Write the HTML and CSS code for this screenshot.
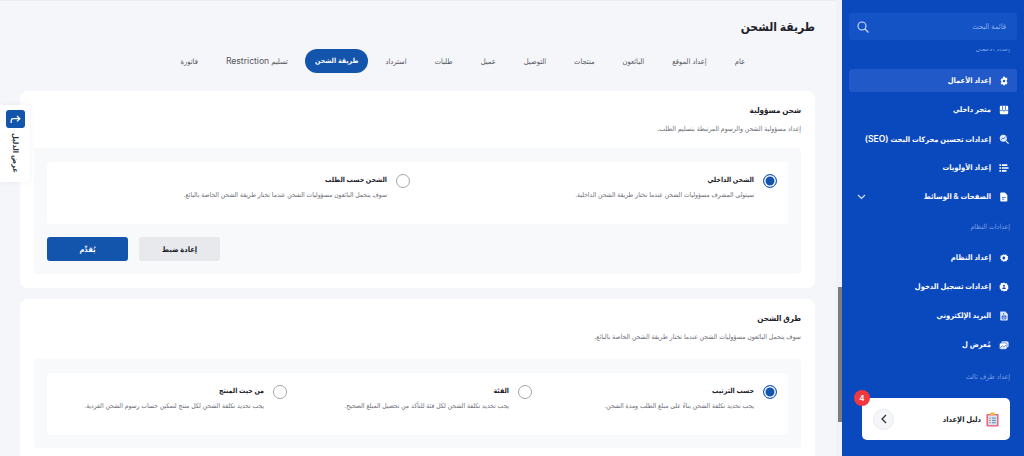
FILE: index.html
```html
<!DOCTYPE html>
<html lang="ar" dir="rtl">
<head>
    <meta charset="UTF-8">
    <meta name="viewport" content="width=device-width, initial-scale=1.0">
    <title>طريقة الشحن</title>
    <link rel="stylesheet" href="styles.css">
</head>
<body>
  <div class="layout">
    <aside class="sidebar">
      <div class="search">
        <span class="search-label">قائمة البحث</span>
        <svg class="search-icon" width="12" height="12" viewBox="0 0 12 12" fill="none" stroke="#d5e2fb" stroke-width="1.1"><circle cx="5" cy="5" r="4"/><path d="M8 8l3.500 3.500"/></svg>
      </div>
      <nav class="menu">
        <div class="menu-heading clipped">إعداد الأعمال</div>
        <a class="menu-item active">
          <svg class="menu-icon" viewBox="0 0 12 12"><path fill="#fff" fill-rule="evenodd" d="M4.800 1h2.400l.4 1.300 1.400-.4 1.200 2.100-1 1v2l1 1-1.200 2.100-1.400-.4-.4 1.300H4.800l-.4-1.300-1.400.4L1.800 9l1-1V6l-1-1L3 2.900l1.400.4zM6 4.500a1.500 1.500 0 1 0 0 3 1.500 1.500 0 0 0 0-3z"/></svg>
          <span>إعداد الأعمال</span>
        </a>
        <a class="menu-item">
          <svg class="menu-icon" viewBox="0 0 12 12"><rect x="1" y="1" width="10" height="10" rx="1.500" fill="#fff"/><path fill="none" stroke="#0a49bd" stroke-width=".8" d="M1 5.600a1.700 1.700 0 0 0 3.300 0 1.700 1.700 0 0 0 3.400 0 1.700 1.700 0 0 0 3.300 0M4.300 1v4.600M7.700 1v4.600"/></svg>
          <span>متجر داخلي</span>
        </a>
        <a class="menu-item">
          <svg class="menu-icon" viewBox="0 0 12 12"><circle cx="5.200" cy="5.200" r="4.200" fill="#dfe9fb"/><path stroke="#fff" stroke-width="1.300" d="M8.500 8.500l3 3"/><path fill="none" stroke="#0a49bd" stroke-width=".9" d="M2.800 6.800l1.700-2 1.200 1 2-2.500"/></svg>
          <span>إعدادات تحسين محركات البحث <span class="latin">(SEO)</span></span>
        </a>
        <a class="menu-item">
          <svg class="menu-icon" viewBox="0 0 12 12"><path fill="#fff" d="M.5 1.500h2v2h-2zM3.500 1.500H10v2H3.500zM.5 5h2v2h-2zM3.500 5h8v2h-8zM.5 8.500h2v2h-2zM3.500 8.500H9v2H3.500z"/></svg>
          <span>إعداد الأولويات</span>
        </a>
        <a class="menu-item has-arrow">
          <svg class="menu-icon" viewBox="0 0 12 12"><path fill="#fff" d="M2.500.5H7L10 3.500v7a1 1 0 0 1-1 1H2.500a1 1 0 0 1-1-1v-9a1 1 0 0 1 1-1z"/><path stroke="#0a49bd" stroke-width=".8" d="M3.500 6.500h4.500M3.500 8.500h3"/></svg>
          <span>الصفحات &amp; الوسائط</span>
          <svg class="menu-arrow" width="9" height="6" viewBox="0 0 9 6" fill="none" stroke="#dbe6ff" stroke-width="1.100"><path d="M1 1l3.500 3.500L8 1"/></svg>
        </a>
        <div class="menu-heading">إعدادات النظام</div>
        <a class="menu-item">
          <svg class="menu-icon" viewBox="0 0 12 12"><path fill="#fff" fill-rule="evenodd" d="M5.500 1.500l1.500.8 1.800-.8.400 1.800 1.800.7-.6 1.800.8 1.700-1.700.8-.6 1.800-1.800-.4-1.500 1-1.200-1.400-1.900-.2.100-1.900L1 6.800l1.100-1.600-.5-1.800 1.800-.5zM5.800 4.300a1.700 1.700 0 1 0 0 3.400 1.700 1.700 0 0 0 0-3.400z"/></svg>
          <span>إعداد النظام</span>
        </a>
        <a class="menu-item">
          <svg class="menu-icon" viewBox="0 0 12 12"><path fill="#fff" d="M6 .5l1.500 1.300 2-.2.600 1.900 1.400 1.400L10.800 6l.7 1.600-1.400 1.400-.6 1.900-2-.2L6 11.500l-1.500-1.300-2 .2L1.900 8.500.5 7.100 1.200 6 .5 4.400l1.400-1.400.6-1.900 2 .2z"/><circle cx="6" cy="4.500" r="1.200" fill="#0a49bd"/><path fill="#0a49bd" d="M3.800 8.500a2.200 2.200 0 0 1 4.400 0z"/></svg>
          <span>إعدادات تسجيل الدخول</span>
        </a>
        <a class="menu-item">
          <svg class="menu-icon" viewBox="0 0 12 12"><path fill="#dfe9fb" d="M2 .5h5.500L10.500 3.500v7a1 1 0 0 1-1 1h-7a1 1 0 0 1-1-1v-9A1 1 0 0 1 2 .5z"/><path fill="none" stroke="#0a49bd" stroke-width=".9" d="M3.700 6h4.600v3.500H3.700zM3.700 6L6 7.800 8.300 6M5.500 2.500v2"/></svg>
          <span>البريد الإلكتروني</span>
        </a>
        <a class="menu-item">
          <svg class="menu-icon" viewBox="0 0 12 12"><rect x="2.500" y="1.500" width="9" height="7.500" rx="1.800" fill="#dfe9fb"/><rect x=".5" y="3.500" width="9" height="7.500" rx="1.800" fill="#fff" stroke="#0a49bd" stroke-width=".6"/><path fill="none" stroke="#0a49bd" stroke-width=".8" d="M1.500 9.500l2.500-2.500 2 1.500 2.500-2.500"/></svg>
          <span>مُعرض ل</span>
        </a>
        <div class="menu-heading last">إعداد طرف ثالث</div>
      </nav>
      <div class="guide">
        <span class="guide-badge">4</span>
        <svg class="guide-icon" width="13" height="15" viewBox="0 0 14 16"><rect x=".5" y="2" width="13" height="13.500" rx="1" fill="#f0627a"/><rect x="2.200" y="3.500" width="9.600" height="10.500" fill="#cfe6f5"/><rect x="4.500" y=".5" width="5" height="3" rx="1" fill="#f3b63f"/><path stroke="#4a7fb0" d="M6.500 6.500h4M6.500 9h4M6.500 11.500h4"/><path stroke="#e2574c" d="M3.500 6.500h1.500M3.500 9h1.500M3.500 11.500h1.500"/></svg>
        <span class="guide-text">دليل الإعداد</span>
        <span class="guide-next">
          <svg width="6" height="10" viewBox="0 0 6 10" fill="none" stroke="#333" stroke-width="1.300"><path d="M5 1L1 5l4 4"/></svg>
        </span>
      </div>
    </aside>

    <div class="scrollbar"><div class="scrollbar-thumb"></div></div>

    <main class="content">
      <h1 class="page-title">طريقة الشحن</h1>
      <div class="tabs">
        <a class="tab">عام</a>
        <a class="tab">إعداد الموقع</a>
        <a class="tab">البائعون</a>
        <a class="tab">منتجات</a>
        <a class="tab">التوصيل</a>
        <a class="tab">عميل</a>
        <a class="tab">طلبات</a>
        <a class="tab">استرداد</a>
        <a class="tab active">طريقة الشحن</a>
        <a class="tab">تسليم <span class="latin">Restriction</span></a>
        <a class="tab">فاتورة</a>
      </div>

      <section class="card">
        <h2 class="card-title">شحن مسؤولية</h2>
        <p class="card-desc">إعداد مسؤولية الشحن والرسوم المرتبطة بتسليم الطلب.</p>
        <div class="card-inner">
          <div class="options two">
            <div class="option">
              <span class="radio checked"></span>
              <div>
                <div class="option-title">الشحن الداخلي</div>
                <div class="option-desc">سيتولى المشرف مسؤوليات الشحن عندما تختار طريقة الشحن الداخلية.</div>
              </div>
            </div>
            <div class="option">
              <span class="radio"></span>
              <div>
                <div class="option-title">الشحن حسب الطلب</div>
                <div class="option-desc">سوف يتحمل البائعون مسؤوليات الشحن عندما تختار طريقة الشحن الخاصة بالبائع.</div>
              </div>
            </div>
          </div>
          <div class="actions">
            <button class="btn btn-reset">إعادة ضبط</button>
            <button class="btn btn-save">يُقدِّم</button>
          </div>
        </div>
      </section>

      <section class="card">
        <h2 class="card-title">طرق الشحن</h2>
        <p class="card-desc card-desc-far">سوف يتحمل البائعون مسؤوليات الشحن عندما تختار طريقة الشحن الخاصة بالبائع.</p>
        <div class="card-inner">
          <div class="options three">
            <div class="option">
              <span class="radio checked"></span>
              <div>
                <div class="option-title">حسب الترتيب</div>
                <div class="option-desc">يجب تحديد تكلفة الشحن بناءً على مبلغ الطلب ومدة الشحن.</div>
              </div>
            </div>
            <div class="option">
              <span class="radio"></span>
              <div>
                <div class="option-title">الفئة</div>
                <div class="option-desc">يجب تحديد تكلفة الشحن لكل فئة للتأكد من تحصيل المبلغ الصحيح.</div>
              </div>
            </div>
            <div class="option">
              <span class="radio"></span>
              <div>
                <div class="option-title">من حيث المنتج</div>
                <div class="option-desc">يجب تحديد تكلفة الشحن لكل منتج لتمكين حساب رسوم الشحن الفردية.</div>
              </div>
            </div>
          </div>
        </div>
      </section>
    </main>
  </div>

  <div class="side-tab">
    <span class="side-tab-icon">
      <svg width="11" height="9" viewBox="0 0 11 9" fill="none" stroke="#fff" stroke-width="1.300"><path d="M1.200 8V5.500A1.800 1.800 0 0 1 3 3.700h6.500M7 1l2.800 2.700L7 6.400"/></svg>
    </span>
    <span class="side-tab-text">عرض الدليل</span>
  </div>
</body>
</html>
```

FILE: styles.css
```css
* {
    box-sizing: border-box;
}

html, body {
    margin: 0;
    height: 100%;
    overflow: hidden;
}

body {
    background-color: #f5f6f9;
    font-family: "Inter", "DejaVu Sans Condensed", "DejaVu Sans", sans-serif;
    color: #1b1b28;
}

.latin {
    font-size: 1.15em;
}

.layout {
    display: flex;
    height: 456px;
}

/* sidebar */
.sidebar {
    position: relative;
    flex: 0 0 182px;
    background-color: #0a49bd;
    padding: 13px 7px 0 7px;
    overflow: hidden;
}

.search {
    display: flex;
    align-items: center;
    justify-content: space-between;
    height: 27px;
    padding: 0 11px 0 8px;
    background-color: #1453c6;
    border-radius: 3px;
}

.search-label {
    font-size: 7.5px;
    color: #8fb0ea;
}

.menu {
    height: 347px;
    margin-top: 9px;
    overflow: hidden;
}

.menu-heading {
    font-size: 7px;
    line-height: 10px;
    color: #7fa3e6;
    padding: 0 7px;
    margin: 14px 0 14px;
}

.menu-heading.clipped {
    margin: -5px 0 15px;
}

.menu-heading.last {
    margin-top: 16px;
}

.menu-item {
    display: flex;
    align-items: center;
    gap: 8px;
    height: 23px;
    margin-bottom: 6px;
    padding: 0 8px;
    border-radius: 3px;
    font-size: 7.5px;
    font-weight: 600;
    color: #fff;
    white-space: nowrap;
}

.menu-item.active {
    background-color: #2259c9;
}

.menu-icon {
    flex: 0 0 10px;
    width: 10px;
    height: 10px;
}

.menu-arrow {
    margin-right: auto;
    margin-left: 0;
}

.guide {
    position: absolute;
    right: 14px;
    top: 398px;
    display: flex;
    align-items: center;
    width: 148px;
    height: 42px;
    padding: 0 11px;
    background-color: #fff;
    border-radius: 5px;
}

.guide-icon {
    margin-left: 5px;
}

.guide-text {
    font-size: 7.5px;
    font-weight: 700;
}

.guide-next {
    display: flex;
    align-items: center;
    justify-content: center;
    width: 21px;
    height: 21px;
    margin-right: auto;
    background-color: #f5f6f9;
    border: 1px solid #e8e9ee;
    border-radius: 50%;
}

.guide-badge {
    position: absolute;
    left: -8px;
    top: -8px;
    width: 16px;
    height: 16px;
    border-radius: 50%;
    background-color: #f1383f;
    color: #fff;
    font-size: 8px;
    font-weight: 600;
    line-height: 16px;
    text-align: center;
}

/* fake page scrollbar, the screenshot shows it mid scroll */
.scrollbar {
    flex: 0 0 6px;
    background-color: #f1f2f5;
    padding-top: 287px;
}

.scrollbar-thumb {
    width: 4px;
    height: 135px;
    background-color: #7d7d7d;
}

/* main content */
.content {
    flex: 1;
    min-width: 0;
    height: 456px;
    overflow: hidden;
    padding: 0 21px 0 20px;
    border-top: 1px solid #eceef2;
}

.page-title {
    margin: 0;
    padding-top: 17px;
    font-size: 12px;
    line-height: 18px;
    font-weight: 700;
    color: #1f1f2b;
}

.tabs {
    display: flex;
    align-items: center;
    gap: 28px;
    height: 24px;
    margin: 13px 0 18px;
    padding-right: 70px;
}

.tab {
    font-size: 7.5px;
    color: #55565f;
    white-space: nowrap;
}

.tab.active {
    padding: 0 10px;
    margin: 0 -11px;
    font-size: 7px;
    line-height: 24px;
    border-radius: 13px;
    background-color: #1354ac;
    color: #fff;
    font-weight: 600;
}

.card {
    background-color: #fff;
    border-radius: 7px;
    padding: 13px 14px 14px;
    margin-bottom: 11px;
}

.card-title {
    margin: 0;
    font-size: 8px;
    line-height: 13px;
    font-weight: 700;
}

.card-desc {
    margin: 7px 0 14px;
    font-size: 6.8px;
    line-height: 10px;
    color: #6b6c75;
}

.card-desc-far {
    margin-bottom: 17px;
}

.card-inner {
    background-color: #f8f9fb;
    border-radius: 4px;
    padding: 14px 13px 13px;
}

.options {
    display: grid;
    background-color: #fff;
    border-radius: 4px;
    height: 62px;
    padding: 12px 11px 0 0;
}

.options.two {
    grid-template-columns: 367px 367px;
}

.options.three {
    grid-template-columns: 245px 245px 240px;
}

.option {
    display: flex;
    gap: 9px;
}

.option-title {
    font-size: 7px;
    line-height: 12px;
    font-weight: 700;
}

.option-desc {
    margin-top: 4px;
    font-size: 6.7px;
    line-height: 10px;
    color: #6b6c75;
}

.radio {
    flex: 0 0 14px;
    width: 14px;
    height: 14px;
    border: 1px solid #a3a4a8;
    border-radius: 50%;
    background-color: #fff;
}

.radio.checked {
    border-color: #1f5fc0;
    background-color: #1354ac;
    box-shadow: inset 0 0 0 1.5px #fff;
}

.actions {
    display: flex;
    justify-content: flex-end;
    gap: 11px;
    margin-top: 13px;
}

.btn {
    width: 81px;
    height: 24px;
    padding: 0;
    border: 0;
    border-radius: 3px;
    font-family: inherit;
    font-size: 7.5px;
    font-weight: 700;
}

.btn-reset {
    background-color: #e8e9ed;
    color: #1b1b28;
}

.btn-save {
    background-color: #1354ac;
    color: #fff;
}

/* floating guide tab */
.side-tab {
    position: absolute;
    left: 0;
    top: 105px;
    display: flex;
    flex-direction: column;
    align-items: center;
    gap: 5px;
    width: 30px;
    height: 77px;
    padding-top: 5px;
    background-color: #fff;
    border-radius: 0 4px 4px 0;
    box-shadow: 0 0 6px rgba(0, 0, 0, 0.06);
}

.side-tab-icon {
    display: flex;
    align-items: center;
    justify-content: center;
    width: 19px;
    height: 18px;
    background-color: #1354ac;
    border-radius: 3px;
}

.side-tab-text {
    writing-mode: vertical-rl;
    font-size: 7.5px;
    font-weight: 600;
    color: #33343c;
    white-space: nowrap;
}
```
